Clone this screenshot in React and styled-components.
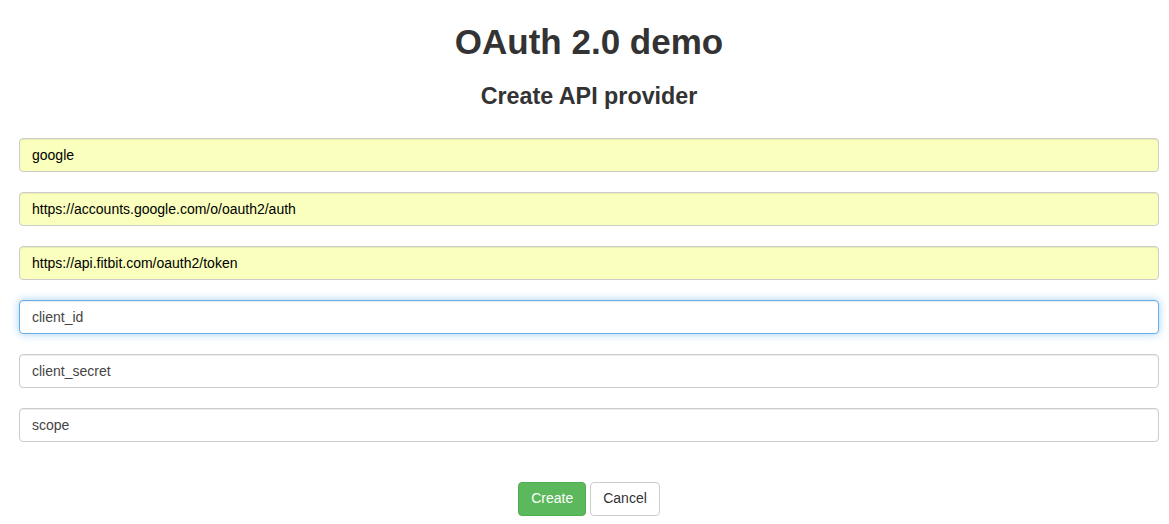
import React from 'react'
import styled, { createGlobalStyle } from 'styled-components'

const GlobalStyle = createGlobalStyle`
  html, body {
    margin: 0;
    padding: 0;
    background: #fff;
  }
  body {
    font-family: "Liberation Sans", Arial, Helvetica, sans-serif;
    font-size: 14px;
    line-height: 1.42857;
    color: #333;
  }
  * { box-sizing: border-box; }
`

const Container = styled.div`
  width: 1140px;
  margin-left: 19px;
  text-align: center;
`

const Title = styled.h1`
  margin: 23px 0 0;
  font-size: 35px;
  font-weight: 700;
  line-height: 1.1;
  color: #333;
`

const SubTitle = styled.h3`
  margin: 22px 0 0;
  font-size: 23.3px;
  font-weight: 700;
  line-height: 1.1;
  color: #333;
`

const Form = styled.form`
  display: flex;
  flex-direction: column;
  gap: 20px;
  margin-top: 29px;
`

const Field = styled.input`
  display: block;
  width: 100%;
  height: 34px;
  padding: 6px 12px;
  font-family: inherit;
  font-size: 14px;
  color: ${p => (p.$filled ? '#000' : '#444')};
  background: ${p => (p.$filled ? '#faffbd' : '#fff')};
  border: 1px solid ${p => (p.$focused ? '#66afe9' : '#ccc')};
  border-radius: 4px;
  box-shadow: inset 0 1px 1px rgba(0, 0, 0, 0.075)
    ${p => (p.$focused ? ', 0 0 8px rgba(102, 175, 233, 0.6)' : '')};
  outline: none;
`

const Actions = styled.div`
  display: flex;
  justify-content: center;
  gap: 4px;
  margin-top: 20px;
`

const Button = styled.button`
  height: 34px;
  padding: 6px 12px;
  font-family: inherit;
  font-size: 14px;
  line-height: 1.42857;
  border-radius: 4px;
  cursor: pointer;
  color: ${p => (p.$primary ? '#fff' : '#333')};
  background: ${p => (p.$primary ? '#5cb85c' : '#fff')};
  border: 1px solid ${p => (p.$primary ? '#4cae4c' : '#ccc')};
`

const fields = [
  { value: 'google', filled: true },
  { value: 'https://accounts.google.com/o/oauth2/auth', filled: true },
  { value: 'https://api.fitbit.com/oauth2/token', filled: true },
  { value: 'client_id', focused: true },
  { value: 'client_secret' },
  { value: 'scope' },
]

export default function App() {
  return (
    <>
      <GlobalStyle />
      <Container>
        <Title>OAuth 2.0 demo</Title>
        <SubTitle>Create API provider</SubTitle>
        <Form onSubmit={e => e.preventDefault()}>
          {fields.map(f => (
            <Field
              key={f.value}
              defaultValue={f.value}
              $filled={f.filled}
              $focused={f.focused}
            />
          ))}
          <Actions>
            <Button type="submit" $primary>Create</Button>
            <Button type="button">Cancel</Button>
          </Actions>
        </Form>
      </Container>
    </>
  )
}
